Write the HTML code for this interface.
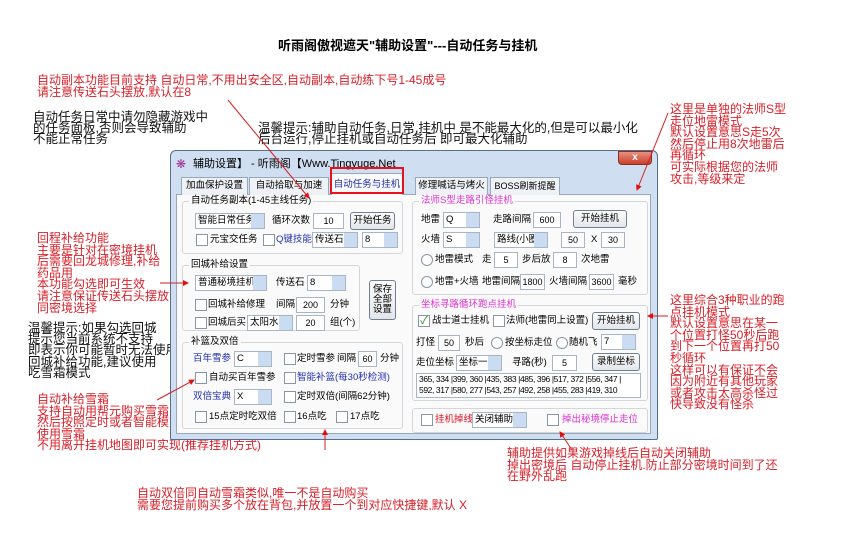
<!DOCTYPE html>
<html><head><meta charset="utf-8"><style>
*{margin:0;padding:0;box-sizing:border-box}
body{width:843px;height:538px;background:#fff;position:relative;overflow:hidden;font-family:"Liberation Sans","Noto Sans CJK SC","WenQuanYi Zen Hei",sans-serif;font-size:10px;color:#000}
.a{position:absolute;white-space:nowrap}
.r{color:#d8202a;font-size:12px;line-height:11.6px}
.k{color:#111;font-size:12.5px;line-height:11.2px}
.win{position:absolute;left:170px;top:150px;width:488px;height:290px;background:#cfdff1;border:1px solid #55708f;border-radius:6px 6px 2px 2px}
.panel{position:absolute;left:176px;top:194px;width:475px;height:240px;background:#fafafa;border:1px solid #98a8bb}
.tab{position:absolute;top:177px;height:18px;background:#eef1f5;border:1px solid #98a8bb;border-bottom:none;font-size:9.5px;line-height:16px;text-align:center;white-space:nowrap}
.g{position:absolute;border:1px solid #d3d7dc;border-radius:3px}
.gt{position:absolute;top:-7px;left:6px;background:#fafafa;padding:0 2px;font-size:9.5px;line-height:12px;white-space:nowrap}
.in{position:absolute;height:16px;background:#fff;border:1px solid #a8b5c4;font-size:9px;line-height:14px;text-align:center}
.cb{position:absolute;height:16px;background:#fff;border:1px solid #a8b5c4;font-size:9.5px;line-height:14px;padding-left:2px;white-space:nowrap;overflow:hidden}
.cb:after{content:"";position:absolute;right:0;top:0;width:13px;height:14px;background:#c9dcf2}
.bt{position:absolute;height:18px;background:linear-gradient(#fbfbfb,#e3e6ea);border:1px solid #6f7f93;border-radius:3px;font-size:9.5px;line-height:16px;text-align:center;white-space:nowrap}
.ck{position:absolute;width:12px;height:12px;border:1px solid #8a96a4;background:#fff}
.rd{position:absolute;width:12px;height:12px;border:1px solid #8a96a4;border-radius:50%;background:#fff}
.t{position:absolute;white-space:nowrap;font-size:9.5px;line-height:14px}
.b{color:#2030b0}.m{color:#e030d0}.rr{color:#e01020}
</style></head><body>
<div class="a" style="left:278px;top:38px;font-size:13px;font-weight:bold;line-height:16px">听雨阁傲视遮天"辅助设置"---自动任务与挂机</div>
<div class="a r" style="left:37px;top:75px">自动副本功能目前支持 自动日常,不用出安全区,自动副本,自动练下号1-45成号<br>请注意传送石头摆放,默认在8</div>
<div class="a k" style="left:33px;top:112px">自动任务日常中请勿隐藏游戏中<br>的任务面板,否则会导致辅助<br>不能正常任务</div>
<div class="a k" style="left:258px;top:123px">温馨提示:辅助自动任务,日常,挂机中 是不能最大化的,但是可以最小化<br>后台运行,停止挂机或自动任务后 即可最大化辅助</div>
<div class="a r" style="left:670px;top:104px">这里是单独的法师S型<br>走位地雷模式<br>默认设置意思S走5次<br>然后停止用8次地雷后<br>再循环<br>可实际根据您的法师<br>攻击,等级来定</div>
<div class="a r" style="left:37px;top:233px">回程补给功能<br>主要是针对在密境挂机<br>后需要回龙城修理,补给<br>药品用<br>本功能勾选即可生效<br>请注意保证传送石头摆放<br>同密境选择</div>
<div class="a k" style="left:28px;top:323px">温馨提示:如果勾选回城<br>提示您当前系统不支持<br>即表示你可能暂时无法使用<br>回城补给功能,建议使用<br>吃雪霜模式</div>
<div class="a r" style="left:37px;top:394px">自动补给雪霜<br>支持自动用帮元购买雪霜<br>然后按照定时或者智能模式<br>使用雪霜<br>不用离开挂机地图即可实现(推荐挂机方式)</div>
<div class="a r" style="left:670px;top:295px">这里综合3种职业的跑<br>点挂机模式<br>默认设置意思在某一<br>个位置打怪50秒后跑<br>到下一个位置再打50<br>秒循环<br>这样可以有保证不会<br>因为附近有其他玩家<br>或者攻击太高杀怪过<br>快导致没有怪杀</div>
<div class="a r" style="left:507px;top:448px">辅助提供如果游戏掉线后自动关闭辅助<br>掉出密境后 自动停止挂机.防止部分密境时间到了还<br>在野外乱跑</div>
<div class="a r" style="left:137px;top:488px">自动双倍同自动雪霜类似,唯一不是自动购买<br>需要您提前购买多个放在背包,并放置一个到对应快捷键,默认 X</div>

<div class="win"></div>
<div class="a" style="left:176px;top:157px;color:#a03090;font-size:12px">❋</div>
<div class="t" style="left:193px;top:157px;font-size:11px">辅助设置】 - 听雨阁【Www.Tingyuge.Net</div>
<div style="position:absolute;left:618px;top:151px;width:34px;height:14px;background:linear-gradient(#e89080,#c8402c);border:1px solid #8a3020;border-radius:0 0 4px 4px;color:#fff;font-size:10px;text-align:center;line-height:12px;font-weight:bold">x</div>
<div class="panel"></div>
<div class="tab" style="left:181px;width:67px">加血保护设置</div>
<div class="tab" style="left:249px;width:80px">自动拾取与加速</div>
<div class="tab" style="left:331px;top:173px;height:22px;width:72px;background:#fafafa;color:#2030a0;line-height:22px">自动任务与挂机</div>
<div style="position:absolute;left:330px;top:167px;width:74px;height:27px;border:2px solid #e8101a"></div>
<div class="tab" style="left:415px;width:73px">修理喊话与烤火</div>
<div class="tab" style="left:490px;width:70px;font-size:9px">BOSS刷新提醒</div>

<div class="g" style="left:182px;top:201px;width:221px;height:53px"><div class="gt">自动任务副本(1-45主线任务)</div></div>
<div class="cb" style="left:195px;top:213px;width:70px">智能日常任务</div>
<div class="t" style="left:272px;top:214px">循环次数</div>
<div class="in" style="left:313px;top:213px;width:31px">10</div>
<div class="bt" style="left:350px;top:212px;width:45px">开始任务</div>
<div class="ck" style="left:196px;top:234px"></div><div class="t" style="left:210px;top:233px">元宝交任务</div>
<div class="ck" style="left:263px;top:234px"></div><div class="t b" style="left:276px;top:233px">Q键技能</div>
<div class="cb" style="left:312px;top:232px;width:46px">传送石</div>
<div class="cb" style="left:362px;top:232px;width:36px">8</div>

<div class="g" style="left:182px;top:265px;width:178px;height:66px"><div class="gt">回城补给设置</div></div>
<div class="cb" style="left:195px;top:275px;width:72px">普通秘境挂机</div>
<div class="t" style="left:276px;top:276px">传送石</div>
<div class="cb" style="left:307px;top:275px;width:39px">8</div>
<div class="ck" style="left:195px;top:299px"></div><div class="t" style="left:208px;top:298px">回城补给修理</div>
<div class="t" style="left:276px;top:298px">间隔</div><div class="in" style="left:296px;top:297px;width:29px">200</div><div class="t" style="left:330px;top:298px">分钟</div>
<div class="ck" style="left:195px;top:317px"></div><div class="t" style="left:208px;top:316px">回城后买</div>
<div class="cb" style="left:247px;top:315px;width:46px">太阳水</div>
<div class="in" style="left:296px;top:315px;width:29px">20</div><div class="t" style="left:330px;top:316px">组(个)</div>
<div class="bt" style="left:369px;top:280px;width:27px;height:40px;font-size:9.5px;line-height:10px;padding-top:4px">保存<br>全部<br>设置</div>

<div class="g" style="left:182px;top:342px;width:221px;height:87px"><div class="gt">补篮及双倍</div></div>
<div class="t b" style="left:193px;top:352px">百年雪参</div>
<div class="cb" style="left:234px;top:351px;width:38px">C</div>
<div class="ck" style="left:284px;top:353px"></div><div class="t" style="left:297px;top:352px">定时雪参</div>
<div class="t" style="left:337px;top:352px">间隔</div><div class="in" style="left:358px;top:351px;width:19px">60</div><div class="t" style="left:380px;top:352px">分钟</div>
<div class="ck" style="left:195px;top:372px"></div><div class="t" style="left:209px;top:371px">自动买百年雪参</div>
<div class="ck" style="left:284px;top:372px"></div><div class="t b" style="left:297px;top:371px">智能补篮(每30秒检测)</div>
<div class="t b" style="left:193px;top:390px">双倍宝典</div>
<div class="cb" style="left:234px;top:389px;width:38px">X</div>
<div class="ck" style="left:284px;top:391px"></div><div class="t" style="left:297px;top:390px">定时双倍(间隔62分钟)</div>
<div class="ck" style="left:195px;top:411px"></div><div class="t" style="left:209px;top:410px">15点定时吃双倍</div>
<div class="ck" style="left:284px;top:411px"></div><div class="t" style="left:297px;top:410px">16点吃</div>
<div class="ck" style="left:336px;top:411px"></div><div class="t" style="left:350px;top:410px">17点吃</div>

<div class="g" style="left:412px;top:201px;width:236px;height:94px"><div class="gt m">法师S型走路引怪挂机</div></div>
<div class="t" style="left:421px;top:213px">地雷</div><div class="cb" style="left:443px;top:212px;width:37px">Q</div>
<div class="t" style="left:493px;top:213px">走路间隔</div><div class="in" style="left:533px;top:212px;width:28px">600</div>
<div class="bt" style="left:573px;top:210px;width:54px">开始挂机</div>
<div class="t" style="left:421px;top:233px">火墙</div><div class="cb" style="left:443px;top:232px;width:37px">S</div>
<div class="cb" style="left:494px;top:232px;width:54px">路线(小圈)</div>
<div class="in" style="left:561px;top:232px;width:24px">50</div><div class="t" style="left:591px;top:233px">X</div>
<div class="in" style="left:601px;top:232px;width:24px">30</div>
<div class="rd" style="left:421px;top:254px"></div><div class="t" style="left:435px;top:253px">地雷模式</div>
<div class="t" style="left:482px;top:253px">走</div><div class="in" style="left:494px;top:252px;width:24px">5</div>
<div class="t" style="left:522px;top:253px">步后放</div><div class="in" style="left:553px;top:252px;width:24px">8</div><div class="t" style="left:581px;top:253px">次地雷</div>
<div class="rd" style="left:421px;top:276px"></div><div class="t" style="left:435px;top:275px">地雷+火墙</div>
<div class="t" style="left:482px;top:275px">地雷间隔</div><div class="in" style="left:520px;top:274px;width:25px">1800</div>
<div class="t" style="left:549px;top:275px">火墙间隔</div><div class="in" style="left:589px;top:274px;width:25px">3600</div><div class="t" style="left:618px;top:275px">毫秒</div>

<div class="g" style="left:412px;top:305px;width:236px;height:96px"><div class="gt m">坐标寻路循环跑点挂机</div></div>
<div class="ck" style="left:418px;top:315px;color:#2a9020;font-size:11px;line-height:10px;text-align:center">✓</div><div class="t" style="left:432px;top:314px">战士道士挂机</div>
<div class="ck" style="left:493px;top:315px"></div><div class="t" style="left:506px;top:314px">法师(地雷同上设置)</div>
<div class="bt" style="left:592px;top:312px;width:48px">开始挂机</div>
<div class="t" style="left:416px;top:336px">打怪</div><div class="in" style="left:438px;top:335px;width:22px">50</div>
<div class="t" style="left:465px;top:336px">秒后</div>
<div class="rd" style="left:491px;top:337px"></div><div class="t" style="left:505px;top:336px">按坐标走位</div>
<div class="rd" style="left:556px;top:337px"></div><div class="t" style="left:569px;top:336px">随机飞</div>
<div class="cb" style="left:601px;top:334px;width:35px">7</div>
<div class="t" style="left:416px;top:356px">走位坐标</div><div class="cb" style="left:456px;top:355px;width:46px">坐标一</div>
<div class="t" style="left:512px;top:356px">寻路(秒)</div><div class="in" style="left:552px;top:355px;width:25px">5</div>
<div class="bt" style="left:592px;top:353px;width:48px">录制坐标</div>
<div class="in" style="left:416px;top:373px;width:225px;height:25px;text-align:left;font-size:8.5px;letter-spacing:-0.4px;line-height:11px;padding-left:2px;white-space:nowrap;overflow:hidden">365, 334 |399, 360 |435, 383 |485, 396 |517, 372 |556, 347 |<br>592, 317 |580, 277 |543, 257 |492, 258 |455, 283 |419, 310</div>

<div class="g" style="left:412px;top:408px;width:236px;height:25px"></div>
<div class="ck" style="left:421px;top:414px"></div><div class="t rr" style="left:435px;top:413px">挂机掉线</div>
<div class="cb" style="left:472px;top:412px;width:55px">关闭辅助</div>
<div class="ck" style="left:547px;top:414px"></div><div class="t m" style="left:562px;top:413px">掉出秘境停止走位</div>

<svg style="position:absolute;left:0;top:0" width="843" height="538">
<defs><marker id="ar" markerWidth="6" markerHeight="6" refX="5" refY="3" orient="auto"><path d="M0,0 L6,3 L0,6z" fill="#e01010"/></marker></defs>
<g stroke="#d02020" stroke-width="1" fill="none" marker-end="url(#ar)">
<line x1="228" y1="100" x2="309" y2="198"/>
<line x1="668" y1="113" x2="637" y2="190"/>
<line x1="160" y1="283" x2="188" y2="283"/>
<line x1="157" y1="400" x2="194" y2="380"/>
<line x1="668" y1="316" x2="648" y2="316"/>
<line x1="325" y1="450" x2="325" y2="430"/>
<line x1="572" y1="450" x2="560" y2="432"/>
</g></svg>
</body></html>
